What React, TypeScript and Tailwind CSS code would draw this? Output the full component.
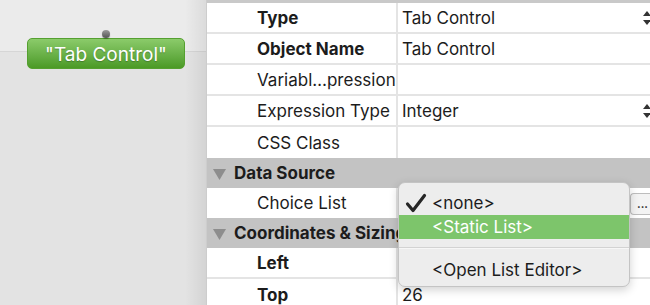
import React from "react";

const font = "font-['Inter','Liberation_Sans',sans-serif]";

function Stepper() {
  return (
    <svg
      className="absolute right-[-1px] top-1/2 -translate-y-1/2"
      width="8"
      height="14"
      viewBox="0 0 8 14"
    >
      <path d="M4 0 L8 5 L0 5 Z" fill="#333" />
      <path d="M4 14 L8 9 L0 9 Z" fill="#333" />
    </svg>
  );
}

function Row({
  label,
  value,
  bold,
  stepper,
  last,
}: {
  label: string;
  value?: string;
  bold?: boolean;
  stepper?: boolean;
  last?: boolean;
}) {
  return (
    <div
      className={`flex h-[31px] shrink-0 ${last ? "" : "border-b-2 border-[#e4e4e4]"}`}
    >
      <div
        className={`w-[189px] shrink-0 pl-[50px] pt-[2px] flex items-center text-[17px] text-[#1c1c1c] whitespace-nowrap overflow-hidden ${bold ? "font-bold" : ""}`}
      >
        {label}
      </div>
      <div className="w-[2px] shrink-0 bg-[#e4e4e4]" />
      <div className="relative flex-1 pl-[4px] pt-[2px] flex items-center text-[17px] text-[#1c1c1c]">
        {value}
        {stepper && <Stepper />}
      </div>
    </div>
  );
}

function Header({ label }: { label: string }) {
  return (
    <div className="flex h-[30px] shrink-0 items-center bg-[#c3c3c3] pl-[6px] pt-[1px]">
      <svg width="13" height="11" viewBox="0 0 13 11" className="mr-[8px] mt-[2px] shrink-0">
        <path d="M0 0 L13 0 L6.5 11 Z" fill="#8d8d8d" />
      </svg>
      <span className="text-[17px] font-bold text-[#1c1c1c] whitespace-nowrap">{label}</span>
    </div>
  );
}

export default function App() {
  return (
    <div className={`relative w-[650px] h-[305px] overflow-hidden flex ${font}`}>
      {/* Canvas */}
      <div className="relative w-[207px] h-full shrink-0 flex flex-col bg-[#e3e3e3]">
        <div className="h-[52px] bg-[#ebebeb] border-b border-[#d6d6d6] shrink-0" />
        <div className="flex-1" />
        <div className="absolute inset-y-0 right-0 w-[22px] bg-gradient-to-r from-transparent to-[rgba(0,0,0,0.07)]" />
        <div className="absolute inset-y-0 right-0 w-[1px] bg-[#cdcdcd]" />
        {/* green object */}
        <div className="absolute left-[27px] top-[38px] w-[158px] h-[31px] rounded-[5px] bg-gradient-to-b from-[#8bcb6a] to-[#4b9a25] border border-[#55a030] flex items-center justify-center pt-[3px] text-white text-[19px] [text-shadow:0_1px_1px_rgba(0,0,0,0.25)]">
          "Tab Control"
        </div>
        <div className="absolute left-[102px] top-[30px] w-[8px] h-[8px] rounded-full bg-gradient-to-b from-[#9a9a9a] to-[#555] shadow-[0_1px_1px_rgba(0,0,0,0.3)]" />
      </div>

      {/* Inspector */}
      <div className="flex-1 h-full bg-white border-t-[3px] border-[#c9c9c9] flex flex-col">
        <Row label="Type" value="Tab Control" bold stepper />
        <Row label="Object Name" value="Tab Control" bold />
        <Row label="Variabl…pression" />
        <Row label="Expression Type" value="Integer" stepper />
        <Row label="CSS Class" last />
        <Header label="Data Source" />
        <div className="flex h-[30px] shrink-0">
          <div className="w-[189px] shrink-0 pl-[50px] pt-[2px] flex items-center text-[17px] text-[#1c1c1c]">
            Choice List
          </div>
          <div className="w-[2px] shrink-0 bg-[#e4e4e4]" />
          <div className="relative flex-1 flex items-center justify-end">
            <div className="h-[22px] w-[20px] mt-[2px] bg-[#f3f3f3] border border-r-0 border-[#bdbdbd] rounded-l-[4px] flex items-center pl-[6px] text-[11px] font-bold leading-none text-[#222]">
              ...
            </div>
          </div>
        </div>
        <Header label="Coordinates & Sizing" />
        <Row label="Left" bold />
        <Row label="Top" value="26" bold last />
      </div>

      {/* Popup menu */}
      <div className="absolute left-[398px] top-[182px] w-[232px] h-[105px] rounded-[7px] bg-[#ededed] border border-[#c4c4c4] shadow-[0_3px_10px_rgba(0,0,0,0.18)] pt-[8px] text-[17px] text-[#1c1c1c] overflow-hidden">
        <div className="relative h-[24px] flex items-center pl-[33px] pt-[2px]">
          <svg
            className="absolute left-[6px] top-[2px]"
            width="22"
            height="20"
            viewBox="0 0 22 20"
          >
            <path
              d="M2.5 11 L8 17.5 L19.5 2.5"
              fill="none"
              stroke="#262626"
              strokeWidth="3.2"
              strokeLinecap="round"
              strokeLinejoin="round"
            />
          </svg>
          &lt;none&gt;
        </div>
        <div className="h-[24px] flex items-center pl-[33px] pt-[2px] bg-[#7dc56b] text-white">
          &lt;Static List&gt;
        </div>
        <div className="h-[18px] flex items-center">
          <div className="w-full h-[2px] border-t border-[#d3d3d3] border-b border-b-[#f7f7f7]" />
        </div>
        <div className="h-[24px] flex items-center pl-[33px] pt-[3px]">&lt;Open List Editor&gt;</div>
      </div>
    </div>
  );
}
